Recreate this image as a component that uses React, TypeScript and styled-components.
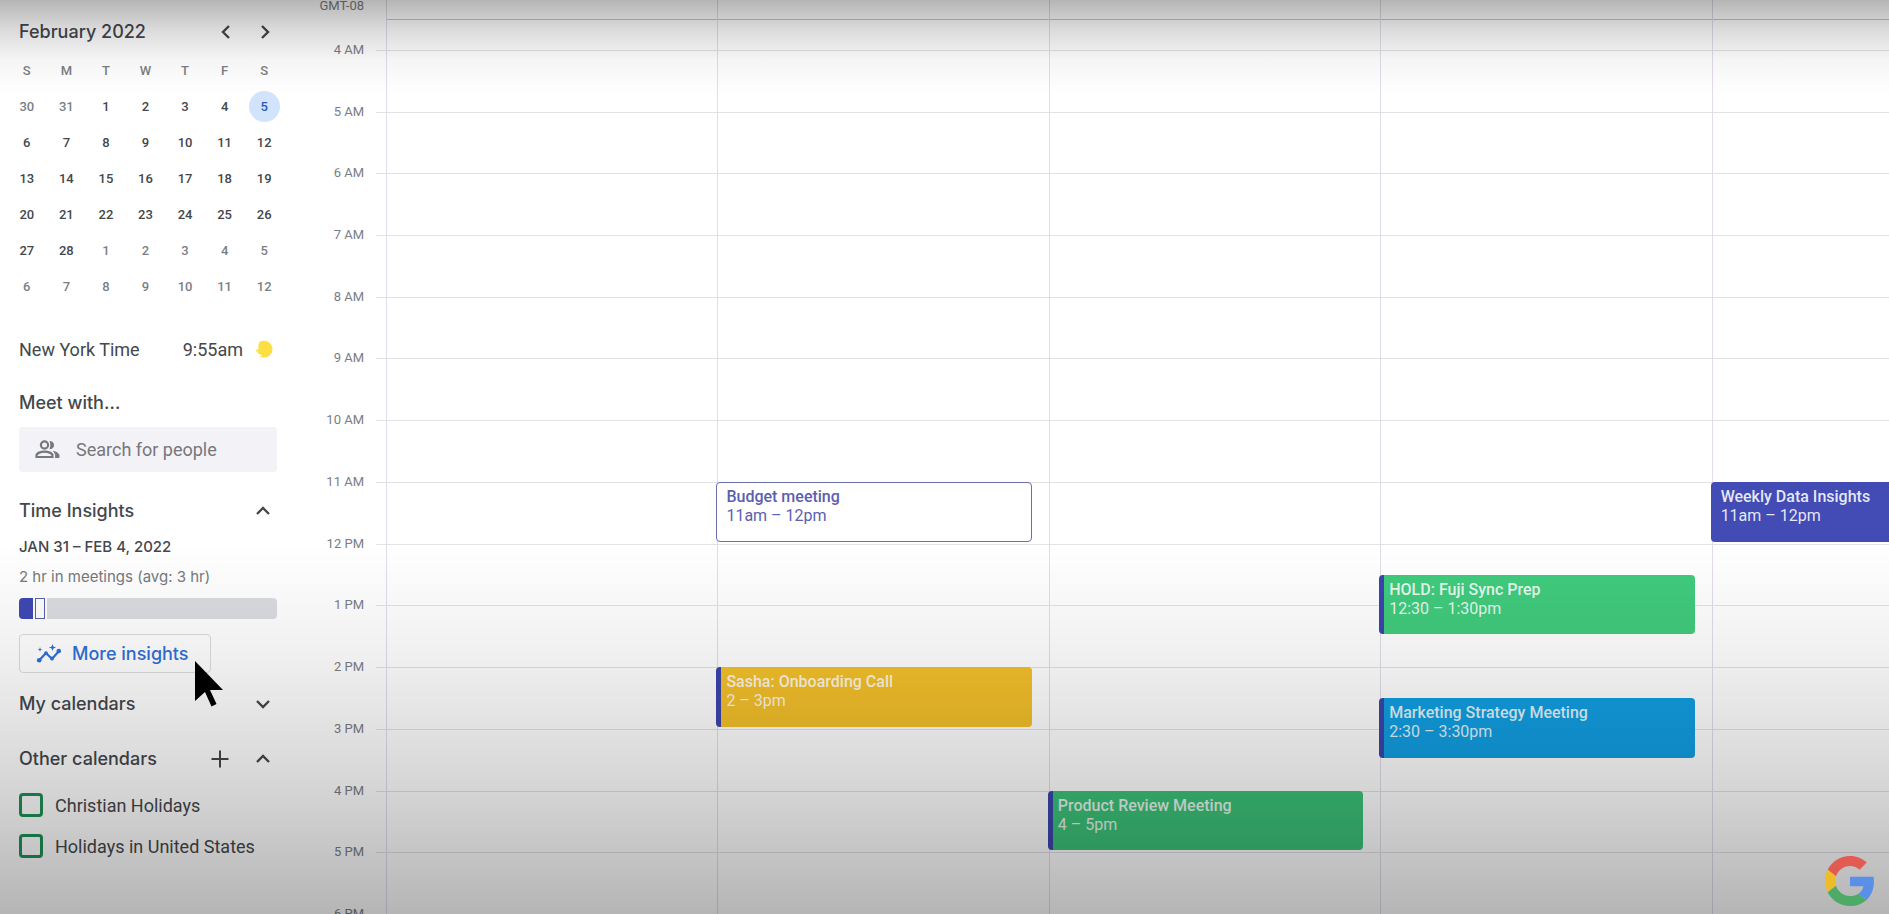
import React from "react";
import styled, { createGlobalStyle, css } from "styled-components";

const GlobalStyle = createGlobalStyle`
  *, *::before, *::after { box-sizing: border-box; }
  body { margin: 0; background: #fff; color: #44474b; font-family: Roboto, sans-serif; }
  button, input { font: inherit; color: inherit; }
  h1, h2, p, ul { margin: 0; padding: 0; font-weight: inherit; }
`;

const displayFont = "Inter, Roboto, sans-serif";

const Page = styled.div`
  position: relative;
  display: flex;
  min-height: 100vh;
  overflow: hidden;
`;

/* Darkens the top and bottom edges of the frame. */
const Shade = styled.div`
  position: absolute;
  inset: 0;
  z-index: 3;
  pointer-events: none;
  background:
    linear-gradient(to bottom, rgba(0, 0, 0, 0.29) 0, rgba(0, 0, 0, 0.15) 28px, rgba(0, 0, 0, 0.04) 60px, transparent 95px),
    linear-gradient(to top, rgba(0, 0, 0, 0.29) 0, rgba(0, 0, 0, 0.16) 130px, rgba(0, 0, 0, 0.06) 260px, transparent 370px);
`;

const Sidebar = styled.aside`
  flex: none;
  width: 296px;
  padding: 12px 19px 0;
`;

const IconButton = styled.button`
  display: grid;
  place-items: center;
  width: 24px;
  height: 24px;
  padding: 0;
  border: 0;
  background: none;
  cursor: pointer;
`;

const MonthHeader = styled.header`
  display: flex;
  align-items: center;
  height: 40px;
`;

const Heading = styled.h2`
  flex: 1;
  font: 500 18px/24px ${displayFont};
`;

const MonthNav = styled.div`
  display: flex;
  gap: 15px;
`;

const MonthTable = styled.table`
  width: 277px;
  margin: 0 0 0 -12px;
  border-collapse: collapse;
  table-layout: fixed;
  font-size: 13px;
  font-weight: 500;
  th, td { height: 36px; padding: 0; text-align: center; }
  th { font-weight: 500; color: #7b7f85; }
`;

const DayButton = styled.button<{ $muted: boolean; $today: boolean }>`
  display: block;
  width: 31px;
  height: 31px;
  margin: 0 auto;
  padding: 0;
  border: 0;
  border-radius: 50%;
  background: ${(p) => (p.$today ? "#d2e3fc" : "none")};
  color: ${(p) => (p.$today ? "#2a5cb8" : p.$muted ? "#7b7f85" : "#44474b")};
`;

const WorldClock = styled.div`
  display: flex;
  align-items: center;
  height: 40px;
  margin-top: 25px;
  font-size: 18px;
  time { margin-left: auto; }
  svg { margin: 0 4px 0 12px; }
`;

const Section = styled.section<{ $gap: number }>`
  margin-top: ${(p) => p.$gap}px;
`;

const SectionHeader = styled.header`
  display: flex;
  align-items: center;
  height: 24px;
  gap: 19px;
  padding-right: 2px;
`;

const SearchField = styled.label`
  display: flex;
  align-items: center;
  height: 45px;
  margin-top: 12px;
  padding-left: 16px;
  gap: 16px;
  border-radius: 4px;
  background: #f3f2f6;
  color: #75787d;
  input {
    flex: 1;
    min-width: 0;
    border: 0;
    padding: 0;
    outline: 0;
    background: none;
    font-size: 18px;
  }
  input::placeholder { color: #75787d; opacity: 1; }
`;

const InsightRange = styled.p`
  margin-top: 14px;
  font: 500 15px/20px ${displayFont};
`;

const InsightSummary = styled.p`
  margin-top: 10px;
  font: 400 15px/20px ${displayFont};
  color: #75787d;
`;

const InsightBar = styled.div`
  display: flex;
  height: 21px;
  margin-top: 11px;
  gap: 2px;
  border-radius: 4px;
  overflow: hidden;
`;

const Segment = styled.span<{ $kind: "busy" | "tentative" | "free" }>`
  ${(p) => p.$kind === "busy" && css`width: 14px; background: #3f48b5;`}
  ${(p) => p.$kind === "tentative" && css`width: 10px; border: 1px solid #5a60ac; background: #fff;`}
  ${(p) => p.$kind === "free" && css`flex: 1; background: #dadce0;`}
`;

const InsightsButton = styled.button`
  display: flex;
  align-items: center;
  height: 39px;
  margin-top: 15px;
  padding: 0 21px 0 16px;
  gap: 10px;
  border: 1px solid #dadce0;
  border-radius: 4px;
  background: none;
  color: #2f70d8;
  font: 500 18px/24px ${displayFont};
`;

const CalendarList = styled.ul`
  display: grid;
  gap: 17px;
  margin-top: 22px;
  list-style: none;
  label { display: flex; align-items: center; gap: 12px; height: 24px; font-size: 18px; }
`;

const Checkbox = styled.input`
  appearance: none;
  flex: none;
  width: 24px;
  height: 24px;
  margin: 0;
  border: 3px solid #1f9156;
  border-radius: 4px;
`;

const Calendar = styled.main`
  flex: 1;
  min-width: 0;
  display: grid;
  grid-template: 19px 1fr / 90px minmax(0, 1fr);
`;

const ZoneLabel = styled.div`
  padding-right: 22px;
  text-align: right;
  font-size: 13px;
  line-height: 11px;
  color: #7b7d85;
`;

const dayColumns = css`
  display: grid;
  grid-template-columns: repeat(5, 22.05%);
`;

const DayHeader = styled.div`
  ${dayColumns}
  box-shadow: 0 1px #c4c4c9;
  span { border-left: 1px solid #dfdae4; }
`;

const halfHourRows = css`
  display: grid;
  grid-template-rows: repeat(29, minmax(30px, 1fr));
  grid-auto-rows: 0;
`;

const HourLabels = styled.div`
  ${halfHourRows}
`;

const HourLabel = styled.span<{ $row: number }>`
  grid-row: ${(p) => p.$row};
  height: 16px;
  margin-top: -8px;
  padding-right: 22px;
  text-align: right;
  font-size: 13px;
  line-height: 16px;
  color: #7b7d85;
`;

const Week = styled.div`
  position: relative;
  ${dayColumns}
`;

const HourLines = styled.div`
  ${halfHourRows}
  position: absolute;
  inset: 0 0 0 -10px;
`;

const HourLine = styled.span<{ $row: number }>`
  grid-row: ${(p) => p.$row};
  border-top: 1px solid #e2e1e6;
`;

const Day = styled.div`
  ${halfHourRows}
  position: relative;
  border-left: 1px solid #e3dce8;
`;

type Tone = "outline" | "indigo" | "yellow" | "green" | "emerald" | "blue";

const toneColors: Record<Tone, string> = {
  outline: "#fff",
  indigo: "#434bb5",
  yellow: "#f4c02a",
  green: "#40cb7d",
  emerald: "#3cc278",
  blue: "#119fe3",
};

const EventCard = styled.article<{ $row: number; $tone: Tone }>`
  grid-row: ${(p) => p.$row} / span 2;
  margin: 0 17px 2px -2px;
  padding: 5px 9px 0 ${(p) => (p.$tone === "indigo" ? 10 : p.$tone === "outline" ? 9 : 5)}px;
  border-radius: 4px;
  background: ${(p) => toneColors[p.$tone]};
  color: rgba(255, 255, 255, 0.88);
  font-size: 16px;
  line-height: 19px;
  overflow: hidden;
  white-space: nowrap;
  ${(p) =>
    p.$tone === "outline"
      ? css`border: 1px solid #6a6fae; padding-top: 4px; color: #5a60b0;`
      : p.$tone !== "indigo" && css`border-left: 5px solid #3b45ab;`}
`;

const EventTitle = styled.h3`
  margin: 0;
  font-size: inherit;
  font-weight: 500;
`;

const Pointer = styled.svg`
  position: absolute;
  left: 193px;
  top: 658px;
  z-index: 4;
`;

const Logo = styled.svg`
  position: absolute;
  right: 14px;
  bottom: 8px;
  z-index: 4;
  opacity: 0.8;
`;

function Chevron({ turn = 0 }: { turn?: number }) {
  return (
    <svg width="18" height="18" viewBox="0 0 18 18" fill="none" stroke="currentColor" strokeWidth="2.4">
      <path d="M3 12 9 6l6 6" transform={`rotate(${turn} 9 9)`} />
    </svg>
  );
}

const weekdays = ["S", "M", "T", "W", "T", "F", "S"];
const cells = [30, 31, ...Array.from({ length: 28 }, (_, i) => i + 1), ...Array.from({ length: 12 }, (_, i) => i + 1)];
const weeks = Array.from({ length: 6 }, (_, w) => cells.slice(w * 7, w * 7 + 7));

const hours = Array.from({ length: 15 }, (_, i) => {
  const hour = i + 4;
  return { row: i * 2 + 2, label: hour < 12 ? `${hour} AM` : `${hour === 12 ? 12 : hour - 12} PM` };
});

interface CalendarEvent { title: string; time: string; row: number; tone: Tone }

const days: CalendarEvent[][] = [
  [],
  [
    { title: "Budget meeting", time: "11am – 12pm", row: 16, tone: "outline" },
    { title: "Sasha: Onboarding Call", time: "2 – 3pm", row: 22, tone: "yellow" },
  ],
  [{ title: "Product Review Meeting", time: "4 – 5pm", row: 26, tone: "emerald" }],
  [
    { title: "HOLD: Fuji Sync Prep", time: "12:30 – 1:30pm", row: 19, tone: "green" },
    { title: "Marketing Strategy Meeting", time: "2:30 – 3:30pm", row: 23, tone: "blue" },
  ],
  [{ title: "Weekly Data Insights", time: "11am – 12pm", row: 16, tone: "indigo" }],
];

export default function App() {
  return (
    <Page>
      <GlobalStyle />
      <Sidebar>
        <MonthHeader>
          <Heading as="h1">February 2022</Heading>
          <MonthNav>
            <IconButton aria-label="Previous month"><Chevron turn={-90} /></IconButton>
            <IconButton aria-label="Next month"><Chevron turn={90} /></IconButton>
          </MonthNav>
        </MonthHeader>
        <MonthTable>
          <thead>
            <tr>{weekdays.map((d, i) => <th key={i} scope="col">{d}</th>)}</tr>
          </thead>
          <tbody>
            {weeks.map((week, w) => (
              <tr key={w}>
                {week.map((day, d) => {
                  const index = w * 7 + d;
                  return (
                    <td key={d}>
                      <DayButton $muted={index < 2 || index > 29} $today={index === 6}>{day}</DayButton>
                    </td>
                  );
                })}
              </tr>
            ))}
          </tbody>
        </MonthTable>

        <WorldClock>
          <span>New York Time</span>
          <time>9:55am</time>
          <svg width="18" height="18" viewBox="0 0 18 18" aria-hidden="true">
            <path fill="#fbdf45" d="M4.500 2A8.600 8.600 0 0 1 17.500 9c0 5-4 8.700-8.500 8.500-1.700 0-3.200-.4-4.500-1.300 1.300.1 2.200-.3 2.700-1C4.500 14.500 1.500 12.500.5 9.500c1.200.3 2.300.2 3.200-.4C3 6.500 3.200 4 4.500 2Z" />
          </svg>
        </WorldClock>

        <Section $gap={22}>
          <SectionHeader><Heading>Meet with…</Heading></SectionHeader>
          <SearchField>
            <svg width="25" height="20" viewBox="0 0 25 20" fill="none" stroke="currentColor" strokeWidth="2.2" aria-hidden="true">
              <circle cx="9.500" cy="5" r="3.600" />
              <path d="M1.500 17v-1.500c0-2.500 4.500-3.900 8-3.900s8 1.400 8 3.900V17Z" />
              <path d="M15 1.500a3.600 3.600 0 0 1 0 7.200c1.200-2 1.200-5.200 0-7.200ZM18.500 11.500c3 .6 5.500 1.900 5.500 4V17.500h-3.500v-2c0-1.700-.8-3-2-4Z" fill="currentColor" strokeWidth="1" />
            </svg>
            <input type="text" placeholder="Search for people" aria-label="Search for people" />
          </SearchField>
        </Section>

        <Section $gap={27}>
          <SectionHeader>
            <Heading>Time Insights</Heading>
            <IconButton aria-label="Collapse time insights"><Chevron /></IconButton>
          </SectionHeader>
          <InsightRange>JAN 31 – FEB 4, 2022</InsightRange>
          <InsightSummary>2 hr in meetings (avg: 3 hr)</InsightSummary>
          <InsightBar>
            <Segment $kind="busy" />
            <Segment $kind="tentative" />
            <Segment $kind="free" />
          </InsightBar>
          <InsightsButton>
            <svg width="26" height="20" viewBox="0 0 26 20" fill="none" stroke="currentColor" strokeWidth="2.2" aria-hidden="true">
              <path d="m3 16.500 7-7.500 6 6 7-8" />
              <g fill="currentColor" stroke="none">
                <circle cx="3.200" cy="16.300" r="2.300" /><circle cx="10" cy="9.200" r="1.900" /><circle cx="16" cy="14.500" r="1.900" /><circle cx="22.800" cy="7" r="2.300" />
                <path d="m16.500 0 .9 2.600 2.600.9-2.600.9-.9 2.600-.9-2.600-2.600-.9 2.600-.9ZM4 3l.6 1.900L6.500 5.500l-1.900.6L4 8l-.6-1.900L1.500 5.500l1.900-.6Z" />
              </g>
            </svg>
            More insights
          </InsightsButton>
        </Section>

        <Section $gap={19}>
          <SectionHeader>
            <Heading>My calendars</Heading>
            <IconButton aria-label="Expand my calendars"><Chevron turn={180} /></IconButton>
          </SectionHeader>
        </Section>

        <Section $gap={31}>
          <SectionHeader>
            <Heading>Other calendars</Heading>
            <IconButton aria-label="Add other calendars">
              <svg width="18" height="18" viewBox="0 0 18 18" stroke="currentColor" strokeWidth="2">
                <path d="M9 .5v17M.5 9h17" />
              </svg>
            </IconButton>
            <IconButton aria-label="Collapse other calendars"><Chevron /></IconButton>
          </SectionHeader>
          <CalendarList>
            <li><label><Checkbox type="checkbox" />Christian Holidays</label></li>
            <li><label><Checkbox type="checkbox" />Holidays in United States</label></li>
          </CalendarList>
        </Section>
      </Sidebar>

      <Calendar>
        <ZoneLabel>GMT-08</ZoneLabel>
        <DayHeader>{days.map((_, i) => <span key={i} />)}</DayHeader>
        <HourLabels>
          {hours.map((h) => <HourLabel key={h.row} $row={h.row}>{h.label}</HourLabel>)}
        </HourLabels>
        <Week>
          <HourLines>
            {hours.slice(0, 14).map((h) => <HourLine key={h.row} $row={h.row} />)}
          </HourLines>
          {days.map((events, i) => (
            <Day key={i}>
              {events.map((e) => (
                <EventCard key={e.title} $row={e.row} $tone={e.tone}>
                  <EventTitle>{e.title}</EventTitle>
                  {e.time}
                </EventCard>
              ))}
            </Day>
          ))}
        </Week>
      </Calendar>

      <Shade />
      <Pointer width="34" height="54" viewBox="0 0 34 54" aria-hidden="true">
        <path d="M2 3v40l10-9 6.500 14.500 5-2.500L17 32h13Z" fill="#000" />
      </Pointer>
      <Logo width="50" height="50" viewBox="0 0 48 48" role="img" aria-label="Google">
        <path fill="#EA4335" d="M24 9.500c3.540 0 6.710 1.220 9.210 3.600l6.850-6.850C35.900 2.380 30.470 0 24 0 14.620 0 6.510 5.380 2.560 13.220l7.980 6.190C12.430 13.720 17.740 9.500 24 9.500z" />
        <path fill="#4285F4" d="M46.980 24.550c0-1.570-.15-3.090-.38-4.550H24v9.020h12.940c-.58 2.960-2.260 5.480-4.780 7.180l7.730 6c4.510-4.180 7.090-10.360 7.090-17.650z" />
        <path fill="#FBBC05" d="M10.530 28.590c-.48-1.450-.76-2.990-.76-4.590s.27-3.140.76-4.590l-7.980-6.190C.92 16.460 0 20.120 0 24c0 3.880.92 7.540 2.560 10.780l7.970-6.190z" />
        <path fill="#34A853" d="M24 48c6.480 0 11.930-2.130 15.890-5.810l-7.730-6c-2.150 1.450-4.920 2.300-8.160 2.300-6.260 0-11.570-4.220-13.470-9.910l-7.980 6.190C6.510 42.620 14.620 48 24 48z" />
      </Logo>
    </Page>
  );
}
